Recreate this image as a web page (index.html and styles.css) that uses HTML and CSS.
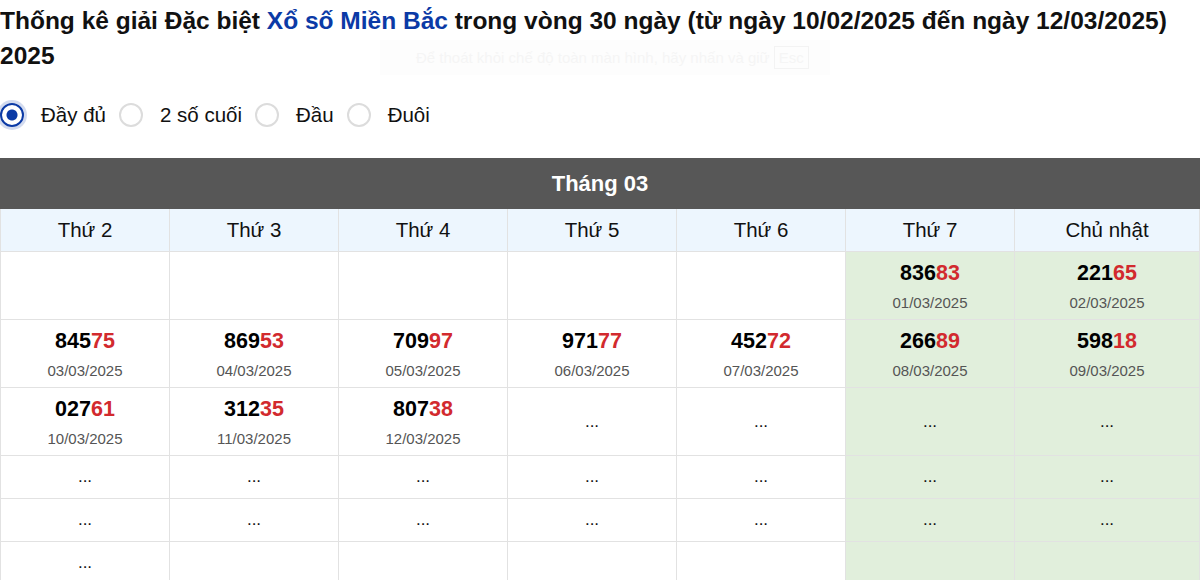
FILE: index.html
```html
<!DOCTYPE html>
<html>

<head>
  <meta charset="utf-8">
  <meta name="viewport" content="width=device-width, initial-scale=1">
  <link rel="stylesheet" href="styles.css">
</head>

<body>

  <h1 class="title">Thống kê giải Đặc biệt <a href="#" class="title-link">Xổ số Miền Bắc</a> trong vòng 30 ngày (từ ngày 10/02/2025 đến ngày 12/03/2025) 2025</h1>

  <div class="modes">
    <label class="mode"><span class="radio checked"></span>Đầy đủ</label>
    <label class="mode"><span class="radio"></span>2 số cuối</label>
    <label class="mode"><span class="radio"></span>Đầu</label>
    <label class="mode"><span class="radio"></span>Đuôi</label>
  </div>

  <table class="cal">
    <colgroup>
      <col class="c-day">
      <col class="c-day">
      <col class="c-day">
      <col class="c-day">
      <col class="c-day">
      <col class="c-day">
      <col class="c-sun">
    </colgroup>
    <thead>
      <tr>
        <th colspan="7" class="month">Tháng 03</th>
      </tr>
      <tr class="days">
        <th>Thứ 2</th>
        <th>Thứ 3</th>
        <th>Thứ 4</th>
        <th>Thứ 5</th>
        <th>Thứ 6</th>
        <th>Thứ 7</th>
        <th>Chủ nhật</th>
      </tr>
    </thead>
    <tbody>
      <tr class="r-res">
        <td></td>
        <td></td>
        <td></td>
        <td></td>
        <td></td>
        <td class="we"><div class="num">836<span class="tail">83</span></div><div class="date">01/03/2025</div></td>
        <td class="we"><div class="num">221<span class="tail">65</span></div><div class="date">02/03/2025</div></td>
      </tr>
      <tr class="r-res">
        <td><div class="num">845<span class="tail">75</span></div><div class="date">03/03/2025</div></td>
        <td><div class="num">869<span class="tail">53</span></div><div class="date">04/03/2025</div></td>
        <td><div class="num">709<span class="tail">97</span></div><div class="date">05/03/2025</div></td>
        <td><div class="num">971<span class="tail">77</span></div><div class="date">06/03/2025</div></td>
        <td><div class="num">452<span class="tail">72</span></div><div class="date">07/03/2025</div></td>
        <td class="we"><div class="num">266<span class="tail">89</span></div><div class="date">08/03/2025</div></td>
        <td class="we"><div class="num">598<span class="tail">18</span></div><div class="date">09/03/2025</div></td>
      </tr>
      <tr class="r-res">
        <td><div class="num">027<span class="tail">61</span></div><div class="date">10/03/2025</div></td>
        <td><div class="num">312<span class="tail">35</span></div><div class="date">11/03/2025</div></td>
        <td><div class="num">807<span class="tail">38</span></div><div class="date">12/03/2025</div></td>
        <td class="dots">...</td>
        <td class="dots">...</td>
        <td class="dots we">...</td>
        <td class="dots we">...</td>
      </tr>
      <tr class="r-empty">
        <td class="dots">...</td>
        <td class="dots">...</td>
        <td class="dots">...</td>
        <td class="dots">...</td>
        <td class="dots">...</td>
        <td class="dots we">...</td>
        <td class="dots we">...</td>
      </tr>
      <tr class="r-empty">
        <td class="dots">...</td>
        <td class="dots">...</td>
        <td class="dots">...</td>
        <td class="dots">...</td>
        <td class="dots">...</td>
        <td class="dots we">...</td>
        <td class="dots we">...</td>
      </tr>
      <tr class="r-empty">
        <td class="dots">...</td>
        <td></td>
        <td></td>
        <td></td>
        <td></td>
        <td class="we"></td>
        <td class="we"></td>
      </tr>
    </tbody>
  </table>

  <!-- fullscreen hint from the browser, barely visible -->
  <div class="fs-hint">Để thoát khỏi chế độ toàn màn hình, hãy nhấn và giữ <span class="fs-key">Esc</span></div>

</body>

</html>
```

FILE: styles.css
```css
body {
  margin: 0;
  font-family: "Liberation Sans", Arial, sans-serif;
  color: #000;
  background: #fff;
}

.title {
  margin: 3px 0 0;
  font-size: 24.5px;
  line-height: 35px;
  font-weight: bold;
  color: #111;
}

.title-link {
  color: #0b3aa6;
  text-decoration: none;
}

.modes {
  display: flex;
  align-items: center;
  margin-top: 26px;
  height: 32px;
}

.mode {
  display: inline-flex;
  align-items: center;
  font-size: 20.5px;
  color: #111;
  margin-right: 13px;
}

.radio {
  box-sizing: border-box;
  width: 24px;
  height: 24px;
  border-radius: 50%;
  border: 2px solid #dcdcdc;
  margin-right: 17px;
  background: #fff;
}

.radio.checked {
  border: 2px solid #0b3aa6;
  background: radial-gradient(circle, #0b3aa6 0, #0b3aa6 5px, #fff 6px);
  box-shadow: 0 0 0 3px rgba(11, 58, 166, 0.18);
}

.cal {
  margin-top: 27px;
  width: 1199px;
  table-layout: fixed;
  border-collapse: collapse;
  text-align: center;
}

.c-day {
  width: 169px;
}

.c-sun {
  width: 185px;
}

.cal th,
.cal td {
  border: 1px solid #e2e2e2;
  padding: 0;
}

.month {
  background: #575757;
  color: #fff;
  font-size: 22px;
  font-weight: bold;
  height: 49px;
  border-top: 1px solid #3c3c3c !important;
  border-color: #575757 !important;
}

.days th {
  background: #edf6fe;
  font-weight: normal;
  font-size: 20.5px;
  height: 42px;
  color: #111;
}

.r-res td {
  height: 68px;
  vertical-align: top;
  padding-top: 6px;
  box-sizing: border-box;
}

.r-empty td {
  height: 42px;
}

.cal td.dots {
  vertical-align: middle;
  padding-top: 0;
  font-size: 17px;
  line-height: 16px;
  color: #111;
}

.we {
  background: #e1efdc;
}

.num {
  font-size: 21.5px;
  font-weight: bold;
  line-height: 30px;
}

.tail {
  color: #d22a2e;
}

.date {
  font-size: 15px;
  line-height: 30px;
  color: #555;
}

.fs-hint {
  position: absolute;
  left: 380px;
  top: 40px;
  width: 450px;
  height: 35px;
  background: #fdfdfd;
  color: #f5f5f5;
  font-size: 15px;
  line-height: 35px;
  padding-left: 36px;
  box-sizing: border-box;
}

.fs-key {
  border: 1px solid #f3f3f3;
  padding: 2px 4px;
}
```
